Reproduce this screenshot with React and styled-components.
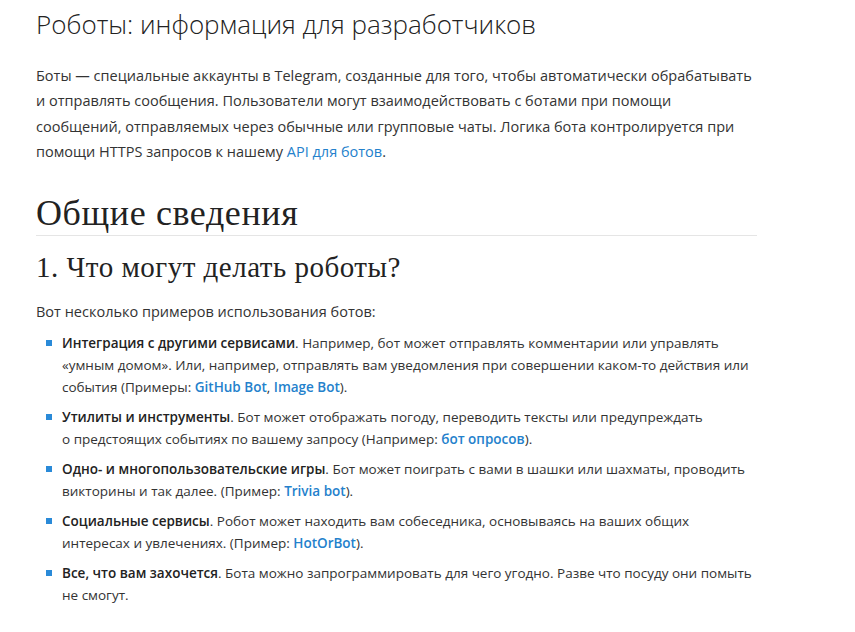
import React from "react";
import styled, { createGlobalStyle } from "styled-components";

const Global = createGlobalStyle`
  body { margin: 0; background: #fff; font-family: "Open Sans", sans-serif; color: #333; }
`;
const Page = styled.div`width: 721px; padding: 6px 0 0 36px;`;
const Title = styled.h1`font-weight: 300; font-size: 26px; line-height: 36px; margin: 0 0 21px; color: #222;`;
const P = styled.p`font-size: 14.5px; line-height: 25.3px; margin: 0;`;
const H2 = styled.h2`font-family: "Liberation Serif", serif; font-weight: 400; font-size: 36px; letter-spacing: 0.6px; line-height: 44px; margin: 27px 0 0; padding: 0; border-bottom: 1px solid #e5e5e5; color: #222;`;
const H3 = styled.h3`font-family: "Liberation Serif", serif; font-weight: 400; font-size: 29px; letter-spacing: 0.5px; line-height: 36px; margin: 13px 0 14px; color: #222;`;
const List = styled.ul`list-style: none; margin: 8px 0 0; padding: 0 0 0 26px;`;
const Item = styled.li`position: relative; font-size: 13.5px; line-height: 22px; margin-bottom: 8px;
  &::before { content: ""; position: absolute; left: -16px; top: 8px; width: 6px; height: 6px; background: #2a8ad8; }`;
const A = styled.a`color: #2481cc; text-decoration: none; font-weight: ${p => p.$b ? 600 : 400};`;
const B = styled.b`font-weight: 600; color: #222;`;

export default function App() {
  return (
    <Page>
      <Global />
      <Title>Роботы: информация для разработчиков</Title>
      <P>Боты — специальные аккаунты в Telegram, созданные для того, чтобы автоматически обрабатывать<br />и отправлять сообщения. Пользователи могут взаимодействовать с ботами при помощи сообщений, отправляемых через обычные или групповые чаты. Логика бота контролируется при помощи HTTPS запросов к нашему <A href="#">API для ботов</A>.</P>
      <H2>Общие сведения</H2>
      <H3>1. Что могут делать роботы?</H3>
      <P>Вот несколько примеров использования ботов:</P>
      <List>
        <Item><B>Интеграция с другими сервисами</B>. Например, бот может отправлять комментарии или управлять «умным домом». Или, например, отправлять вам уведомления при совершении каком-то действия или события (Примеры: <A $b href="#">GitHub Bot</A>, <A $b href="#">Image Bot</A>).</Item>
        <Item><B>Утилиты и инструменты</B>. Бот может отображать погоду, переводить тексты или предупреждать<br />о предстоящих событиях по вашему запросу (Например: <A $b href="#">бот опросов</A>).</Item>
        <Item><B>Одно- и многопользовательские игры</B>. Бот может поиграть с вами в шашки или шахматы, проводить викторины и так далее. (Пример: <A $b href="#">Trivia bot</A>).</Item>
        <Item><B>Социальные сервисы</B>. Робот может находить вам собеседника, основываясь на ваших общих интересах и увлечениях. (Пример: <A $b href="#">HotOrBot</A>).</Item>
        <Item><B>Все, что вам захочется</B>. Бота можно запрограммировать для чего угодно. Разве что посуду они помыть не смогут.</Item>
      </List>
    </Page>
  );
}
